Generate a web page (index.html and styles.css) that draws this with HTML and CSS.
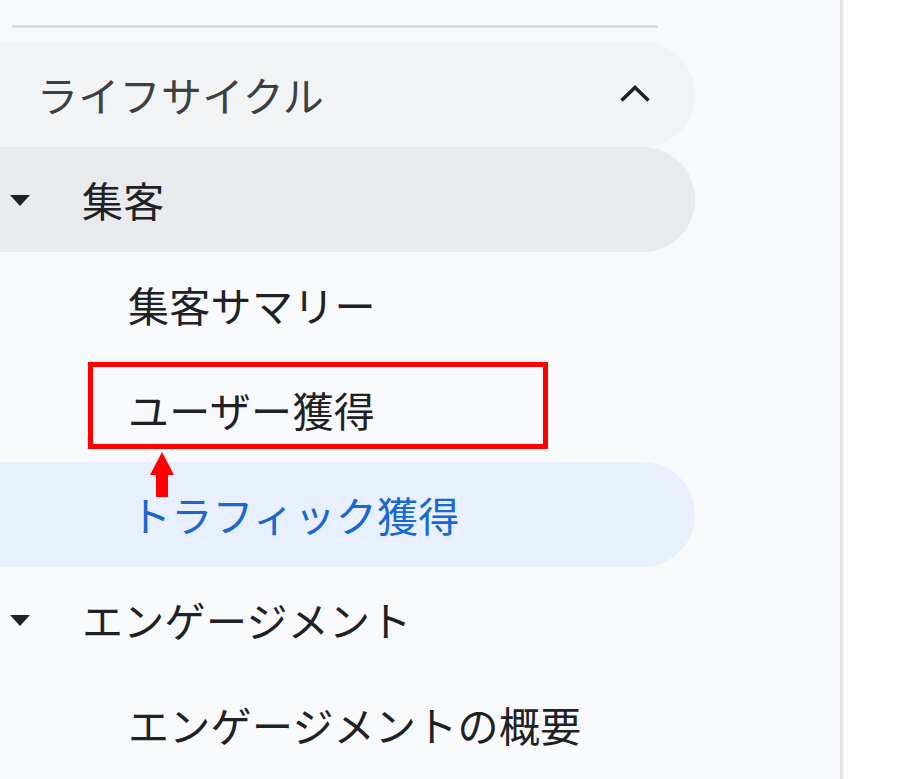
FILE: index.html
```html
<!DOCTYPE html>
<html lang="ja">
<head>
<meta charset="utf-8">
<link rel="stylesheet" href="styles.css">
</head>
<body>
<nav class="sidebar">
  <div class="divider"></div>
  <div class="row section">
    <span class="label">ライフサイクル</span>
    <svg class="chevron" width="32" height="19" viewBox="0 0 32 19"><polyline points="2.5,16.5 16,3.5 29.5,16.5" fill="none" stroke="#202124" stroke-width="3.6" stroke-linejoin="miter"/></svg>
  </div>
  <div class="row group group-open">
    <span class="caret"></span>
    <span class="label">集客</span>
  </div>
  <div class="row item"><span class="label">集客サマリー</span></div>
  <div class="row item annotated">
    <span class="label">ユーザー獲得</span>
    <span class="highlight-box"></span>
    <span class="arrow"><span class="arrow-head"></span><span class="arrow-shaft"></span></span>
  </div>
  <div class="row item active"><span class="label">トラフィック獲得</span></div>
  <div class="row group">
    <span class="caret"></span>
    <span class="label">エンゲージメント</span>
  </div>
  <div class="row item"><span class="label">エンゲージメントの概要</span></div>
</nav>
</body>
</html>
```

FILE: styles.css
```css
html, body {
  margin: 0;
  padding: 0;
  background: #ffffff;
}
body {
  font-family: "Noto Sans CJK JP", "Noto Sans", sans-serif;
  overflow: hidden;
}
.sidebar {
  width: 840px;
  height: 779px;
  background: #f8f9fa;
  border-right: 3px solid #e1e3e6;
  overflow: hidden;
  display: flex;
  flex-direction: column;
}
.divider {
  margin: 25px 0 14px 12px;
  width: 646px;
  height: 3px;
  background: #dadce0;
  flex: none;
}
.row {
  position: relative;
  flex: none;
  width: 695px;
  height: 105px;
  border-radius: 0 52px 52px 0;
  display: flex;
  align-items: center;
  box-sizing: border-box;
}
.label {
  font-size: 41px;
  letter-spacing: 0.3px;
  line-height: 1;
  color: #202124;
  white-space: nowrap;
}
.section {
  background: #f1f3f4;
  padding-left: 37px;
}
.section .label {
  color: #3c4043;
}
.chevron {
  position: absolute;
  left: 619px;
  top: 42px;
}
.group {
  padding-left: 10px;
}
.group-open {
  background: #e8eaed;
}
.caret {
  width: 0;
  height: 0;
  border-left: 10px solid transparent;
  border-right: 10px solid transparent;
  border-top: 11px solid #202124;
  margin-right: 52px;
  margin-top: 2px;
}
.item {
  padding-left: 128px;
}
.active {
  background: #e8f0fe;
  padding-left: 130px;
}
.active .label {
  color: #1967d2;
}
.annotated {
  z-index: 2;
}
.highlight-box {
  position: absolute;
  left: 88px;
  top: 5px;
  width: 460px;
  height: 87px;
  border: 5px solid #ff0000;
  box-sizing: border-box;
}
.arrow {
  position: absolute;
  left: 150px;
  top: 95px;
  width: 24px;
  display: flex;
  flex-direction: column;
  align-items: center;
}
.arrow-head {
  width: 0;
  height: 0;
  border-left: 12px solid transparent;
  border-right: 12px solid transparent;
  border-bottom: 23px solid #ff0000;
}
.arrow-shaft {
  width: 12px;
  height: 22px;
  background: #ff0000;
}
```
